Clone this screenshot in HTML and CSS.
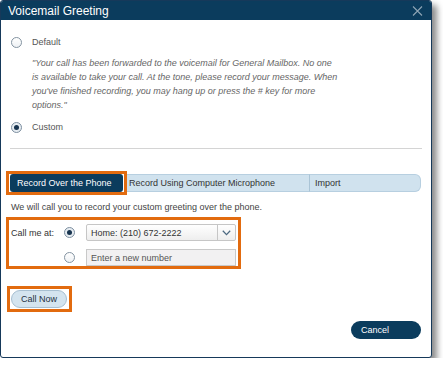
FILE: index.html
```html
<!DOCTYPE html>
<html>
  <head>
    <meta charset="utf-8" />
    <title>Voicemail Greeting</title>
    <link rel="stylesheet" href="styles.css">
  </head>
  <body>
    <div class="dialog">
      <header class="dialog-head">
        <h1>Voicemail Greeting</h1>
        <svg class="close" width="11" height="10" viewBox="0 0 11 10">
          <path d="M1 0.5 L10 9.5 M10 0.5 L1 9.5" stroke="#8ea4b5" stroke-width="1.1" fill="none" />
        </svg>
      </header>
      <div class="dialog-body">
        <label class="option">
          <span class="radio"></span>
          <span>Default</span>
        </label>
        <p class="quote">
          "Your call has been forwarded to the voicemail for General Mailbox. No one<br />
          is available to take your call. At the tone, please record your message. When<br />
          you've finished recording, you may hang up or press the # key for more<br />
          options."
        </p>
        <label class="option custom">
          <span class="radio checked"></span>
          <span>Custom</span>
        </label>
        <div class="sep"></div>

        <div class="tabs">
          <div class="callout tab-callout">
            <div class="tab active">Record Over the Phone</div>
          </div>
          <div class="tab light first">Record Using Computer Microphone</div>
          <div class="tab light last">Import</div>
        </div>

        <p class="hint">We will call you to record your custom greeting over the phone.</p>

        <div class="callout call-box">
          <div class="call-grid">
            <span class="call-label">Call me at:</span>
            <span class="radio checked"></span>
            <div class="select">
              <span>Home: (210) 672-2222</span>
              <span class="select-arrow">
                <svg width="9" height="6" viewBox="0 0 9 6">
                  <path d="M0.8 0.8 L4.5 4.6 L8.2 0.8" stroke="#4d6a82" stroke-width="1.3" fill="none" />
                </svg>
              </span>
            </div>
            <span></span>
            <span class="radio"></span>
            <div class="text-input">Enter a new number</div>
          </div>
        </div>

        <div class="callout call-now-box">
          <button class="btn-light">Call Now</button>
        </div>

        <div class="actions">
          <button class="btn-dark">Cancel</button>
        </div>
      </div>
    </div>
  </body>
</html>
```

FILE: styles.css
```css
html,
body {
  margin: 0;
  background-color: #ffffff;
  font-family: "Liberation Sans", Arial, sans-serif;
  font-size: 9px;
  color: #444;
}
*,
*:before,
*:after {
  box-sizing: border-box;
}
.dialog {
  width: 432px;
  height: 358px;
  border: 1px solid #16395a;
  border-radius: 3px;
  background-color: #fff;
  box-shadow: 5px 5px 6px rgba(0, 0, 0, 0.45);
  overflow: hidden;
}
.dialog-head {
  height: 19px;
  background-color: #0b3c5d;
  display: flex;
  align-items: center;
  justify-content: space-between;
  padding: 0 8px 0 7px;
}
.dialog-head h1 {
  margin: 0;
  font-size: 12px;
  font-weight: normal;
  color: #fff;
}
.close {
  display: block;
}
.dialog-body {
  padding: 0 10px;
}
.option {
  display: flex;
  align-items: center;
  gap: 10px;
  height: 14px;
  margin-top: 15px;
  color: #555;
}
.option.custom {
  margin-top: 8px;
}
.radio {
  width: 11px;
  height: 11px;
  border-radius: 50%;
  border: 1.5px solid #8393a1;
  background: linear-gradient(#ffffff, #eef1f4);
  display: inline-flex;
  align-items: center;
  justify-content: center;
}
.radio.checked {
  border-color: #7d8fa0;
  background: #e6ecf1;
}
.radio.checked:after {
  content: "";
  width: 5px;
  height: 5px;
  border-radius: 50%;
  background-color: #18344f;
}
.quote {
  margin: 7px 0 0 21px;
  line-height: 14px;
  font-style: italic;
  color: #666;
  white-space: nowrap;
}
.sep {
  height: 1px;
  margin: 14px -1px 0;
  background-color: #d4d4d4;
}
.callout {
  border: 3px solid #e26b0f;
  background-color: #fff;
}
.tabs {
  display: flex;
  margin: 22px 0 0 -5px;
}
.tab-callout {
  padding: 0 1px;
}
.tab {
  height: 18px;
  display: flex;
  align-items: center;
  white-space: nowrap;
}
.tab.active {
  width: 113px;
  background-color: #0b3c5d;
  color: #fff;
  border-radius: 3px;
  padding-left: 7px;
}
.tab.light {
  margin-top: 3px;
  background-color: #d0e2ee;
  border: 1px solid #b7cfe0;
  border-left: 0;
  color: #333;
}
.tab.first {
  width: 185px;
  padding-left: 2px;
  border-right: 1px solid #aac4d6;
}
.tab.last {
  width: 112px;
  padding-left: 5px;
  border-radius: 0 6px 6px 0;
}
.hint {
  margin: 5px 0 0;
  line-height: 14px;
  color: #444;
}
.call-box {
  width: 235px;
  height: 52px;
  margin: 3px 0 0 -5px;
  padding: 4px 2px 0;
}
.call-grid {
  display: grid;
  grid-template-columns: 53px 22px 150px;
  row-gap: 8px;
  align-items: center;
}
.call-label {
  color: #333;
}
.select {
  height: 17px;
  display: flex;
  align-items: center;
  justify-content: space-between;
  border: 1px solid #c6c6c6;
  border-radius: 2px;
  background: linear-gradient(#ffffff, #eeeeee);
  padding-left: 4px;
  color: #333;
}
.select-arrow {
  width: 18px;
  height: 15px;
  border-left: 1px solid #c6c6c6;
  display: flex;
  align-items: center;
  justify-content: center;
}
.text-input {
  height: 17px;
  display: flex;
  align-items: center;
  border: 1px solid #c9c9c9;
  background-color: #f2f1f2;
  padding-left: 4px;
  color: #555;
}
.call-now-box {
  width: 65px;
  height: 26px;
  margin: 17px 0 0 -4px;
  padding: 1px;
}
button {
  font-family: inherit;
  font-size: 9px;
  cursor: pointer;
}
.btn-light {
  width: 56px;
  height: 18px;
  border-radius: 9px;
  border: 1px solid #a7bfd1;
  background-color: #d4e4ef;
  color: #1f3142;
  padding: 0;
}
.actions {
  display: flex;
  justify-content: flex-end;
  margin-top: 9px;
}
.btn-dark {
  width: 70px;
  height: 18px;
  border: 0;
  border-radius: 9px;
  background-color: #0b3c5d;
  color: #fff;
  text-align: left;
  padding: 0 0 0 10px;
}
```
